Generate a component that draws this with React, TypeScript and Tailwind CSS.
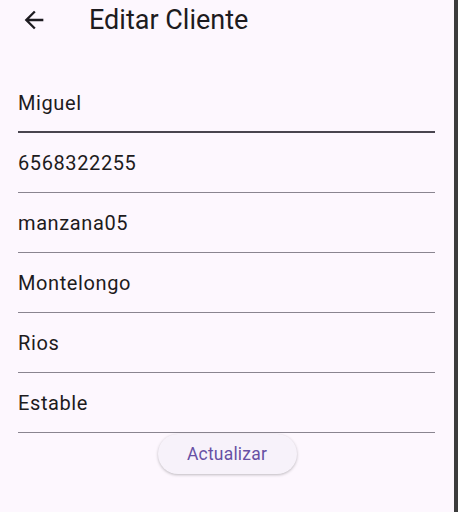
const fields = ["Miguel", "6568322255", "manzana05", "Montelongo", "Rios", "Estable"]

function BackArrow() {
  return (
    <svg width="28" height="28" viewBox="0 0 24 24" fill="#1d1b20">
      <path d="M20 11H7.83l5.59-5.59L12 4l-8 8 8 8 1.41-1.41L7.83 13H20v-2z" />
    </svg>
  )
}

export default function App() {
  return (
    <div className="flex h-[512px] w-[458px] bg-[#fdf7fe] font-['Roboto',sans-serif] text-[#1d1b20]">
      <div className="flex w-[454px] flex-col">
        {/* app bar */}
        <div className="flex h-[40px] items-center">
          <div className="ml-[20px] flex h-[28px] w-[28px] items-center justify-center">
            <BackArrow />
          </div>
          <h1 className="ml-[41px] text-[27px] font-normal leading-none">Editar Cliente</h1>
        </div>

        {/* form */}
        <div className="mt-[33px] flex flex-col pl-[18px] pr-[19px]">
          {fields.map((value, i) => (
            <div
              key={value}
              className={
                i === 0
                  ? "flex h-[60px] items-end border-b-2 border-[#49454f] pb-[16px]"
                  : "flex h-[60px] items-end border-b border-[#8a8590] pb-[17px]"
              }
            >
              <span className="text-[20px] leading-6 tracking-[0.6px]">{value}</span>
            </div>
          ))}
        </div>

        <div className="mt-[1px] flex justify-center">
          <button className="h-[40px] w-[139px] rounded-full bg-[#f7f2fa] text-[17.5px] tracking-[0.2px] text-[#6750a4] shadow-[0_1px_3px_rgba(0,0,0,0.25)]">
            Actualizar
          </button>
        </div>
      </div>
      <div className="h-full w-[4px] bg-[#3c3c3c]" />
    </div>
  )
}
